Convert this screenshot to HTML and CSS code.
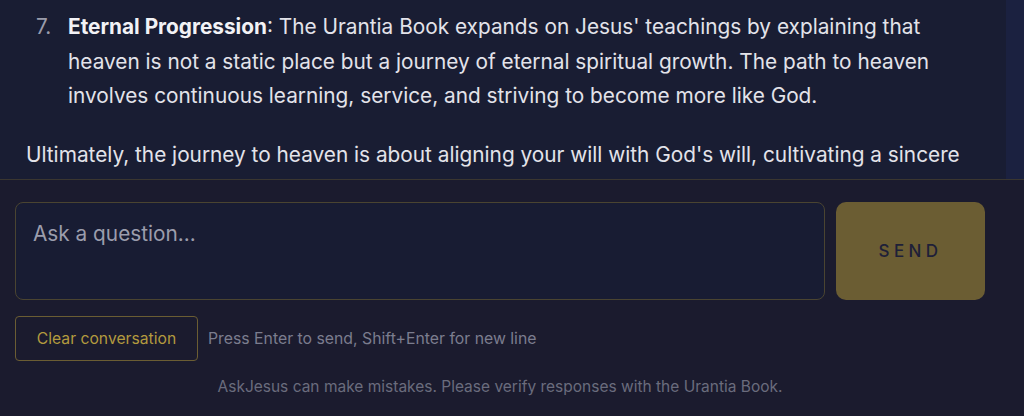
FILE: index.html
```html
<!DOCTYPE html>
<html lang="en">
<head>
<meta charset="utf-8">
<title>AskJesus</title>
<link rel="stylesheet" href="styles.css">
</head>
<body>
<div class="chat">
  <div class="messages">
    <ol class="answer-list" start="7">
      <li><span class="num">7.</span><span class="item-text"><strong>Eternal Progression</strong>: The Urantia Book expands on Jesus' teachings by explaining that heaven is not a static place but a journey of eternal spiritual growth. The path to heaven involves continuous learning, service, and striving to become more like God.</span></li>
    </ol>
    <p class="answer-para">Ultimately, the journey to heaven is about aligning your will with God's will, cultivating a sincere relationship with the Father, and living a life of love and service.</p>
  </div>
  <div class="scroll-track"></div>
</div>
<div class="composer">
  <div class="input-row">
    <div class="question">Ask a question...</div>
    <button class="send">SEND</button>
  </div>
  <div class="actions">
    <button class="clear">Clear conversation</button>
    <span class="hint">Press Enter to send, Shift+Enter for new line</span>
  </div>
  <p class="disclaimer">AskJesus can make mistakes. Please verify responses with the Urantia Book.</p>
</div>
</body>
</html>
```

FILE: styles.css
```css
html, body {
  margin: 0;
  padding: 0;
}
body {
  width: 1024px;
  height: 416px;
  overflow: hidden;
  background: #1b1b2e;
  font-family: Inter, "Noto Sans", sans-serif;
}
.chat {
  height: 179px;
  display: flex;
  overflow: hidden;
  background: #191d33;
  border-bottom: 1px solid #3a3630;
}
.messages {
  flex: 1;
  padding: 10px 0 0 26px;
  color: #e3e3ea;
  font-size: 20.8px;
  line-height: 34.5px;
}
.scroll-track {
  width: 18px;
  background: #1b2140;
}
.answer-list {
  margin: 0;
  padding: 0 60px 0 0;
  list-style: none;
}
.answer-list li {
  display: grid;
  grid-template-columns: 42px 1fr;
}
.num {
  padding-left: 10px;
  color: #9a9cab;
}
.answer-list strong {
  font-weight: 700;
  color: #f2f2f6;
}
.answer-para {
  margin: 24px 0 0 0;
  padding-right: 20px;
}
.composer {
  padding: 22px 39px 0 15px;
}
.input-row {
  display: flex;
  gap: 11px;
}
.question {
  flex: 1;
  box-sizing: border-box;
  height: 98px;
  border: 1px solid #4a4431;
  border-radius: 8px;
  background: #181c33;
  color: #9b9dac;
  font-size: 20.8px;
  padding: 19px 17px;
  line-height: 24px;
}
.send {
  width: 149px;
  height: 98px;
  border: none;
  border-radius: 10px;
  background: #6b5d33;
  color: #1e2038;
  font-family: Inter, "Noto Sans", sans-serif;
  font-size: 17px;
  font-weight: 500;
  letter-spacing: 4.4px;
  padding: 0;
}
.actions {
  display: flex;
  align-items: center;
  gap: 10px;
  margin-top: 16px;
}
.clear {
  width: 183px;
  height: 45px;
  background: transparent;
  border: 1px solid #6b5d33;
  border-radius: 4px;
  color: #b39a3e;
  font-family: Inter, "Noto Sans", sans-serif;
  font-size: 15.7px;
  padding: 0;
}
.hint {
  color: #7b7d8e;
  font-size: 15.8px;
}
.disclaimer {
  margin: 16px 0 0 0;
  text-align: center;
  color: #6a6c7d;
  font-size: 15.5px;
  line-height: 20px;
}
```
